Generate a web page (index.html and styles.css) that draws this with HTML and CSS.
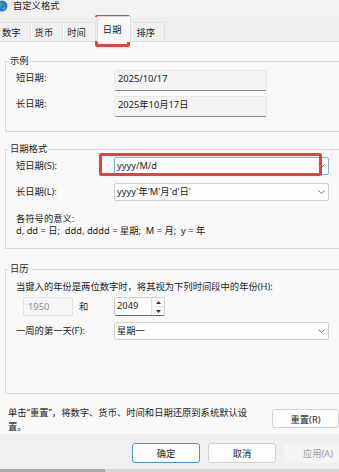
FILE: index.html
```html
<!DOCTYPE html>
<html lang="zh-CN">
<head>
  <meta charset="UTF-8">
  <title>自定义格式</title>
  <link rel="stylesheet" href="styles.css">
</head>
<body>
  <div class="dialog">
    <div class="titlebar">
      <svg class="app-icon" width="12" height="12" viewBox="0 0 12 12">
        <circle cx="6" cy="6" r="5.5" fill="#2b7bd6"/>
        <path d="M2.2 3.2 C3.5 2 5.2 2.2 6 3.4 C5.2 4.6 6.4 5.4 5.2 6.6 C4 7 3.4 6 2.6 6.4 C1.6 5.4 1.6 4.2 2.2 3.2 Z" fill="#4fb44a"/>
        <path d="M7.2 7.2 C8.4 6.8 9.6 7.4 10.2 8.2 C9.4 9.8 8.2 10.6 7 10.8 C7.4 9.6 6.6 8.2 7.2 7.2 Z" fill="#4fb44a"/>
      </svg>
      <span class="title">自定义格式</span>
    </div>

    <div class="tabs">
      <div class="tab">数字</div>
      <div class="tab">货币</div>
      <div class="tab">时间</div>
      <div class="tab active">日期</div>
      <div class="tab">排序</div>
    </div>

    <div class="panel">
      <fieldset class="group">
        <legend>示例</legend>
        <div class="group-body sample-body">
          <div class="row">
            <span class="label">短日期:</span>
            <div class="readonly">2025/10/17</div>
          </div>
          <div class="row">
            <span class="label">长日期:</span>
            <div class="readonly">2025年10月17日</div>
          </div>
        </div>
      </fieldset>

      <fieldset class="group group-format">
        <legend>日期格式</legend>
        <div class="group-body format-body">
          <div class="row row-center">
            <span class="label">短日期(S):</span>
            <div class="combo focused">
              <span>yyyy/M/d</span>
              <svg class="chevron" width="7" height="4" viewBox="0 0 7 4"><polyline points="0.5,0.5 3.5,3.5 6.5,0.5" fill="none" stroke="#6a6a6a" stroke-width="0.9"/></svg>
            </div>
          </div>
          <div class="row row-center">
            <span class="label">长日期(L):</span>
            <div class="combo">
              <span>yyyy'年'M'月'd'日'</span>
              <svg class="chevron" width="7" height="4" viewBox="0 0 7 4"><polyline points="0.5,0.5 3.5,3.5 6.5,0.5" fill="none" stroke="#6a6a6a" stroke-width="0.9"/></svg>
            </div>
          </div>
          <p class="note">各符号的意义:<br>d, dd = 日;&nbsp; ddd, dddd = 星期;&nbsp; M = 月;&nbsp; y = 年</p>
        </div>
      </fieldset>

      <fieldset class="group group-calendar">
        <legend>日历</legend>
        <div class="group-body calendar-body">
          <p class="line">当键入的年份是两位数字时，将其视为下列时间段中的年份(H):</p>
          <div class="year-row">
            <div class="year-box disabled">1950</div>
            <span class="and">和</span>
            <div class="year-box spin">
              <span>2049</span>
              <div class="spinner">
                <span class="spin-btn"><svg width="5" height="3" viewBox="0 0 5 3"><polygon points="0,3 2.5,0 5,3" fill="#333"/></svg></span>
                <span class="spin-btn"><svg width="5" height="3" viewBox="0 0 5 3"><polygon points="0,0 2.5,3 5,0" fill="#333"/></svg></span>
              </div>
            </div>
          </div>
          <div class="row row-center week-row">
            <span class="label">一周的第一天(F):</span>
            <div class="combo">
              <span>星期一</span>
              <svg class="chevron" width="7" height="4" viewBox="0 0 7 4"><polyline points="0.5,0.5 3.5,3.5 6.5,0.5" fill="none" stroke="#6a6a6a" stroke-width="0.9"/></svg>
            </div>
          </div>
        </div>
      </fieldset>

      <div class="reset-row">
        <p>单击“重置”，将数字、货币、时间和日期还原到系统默认设置。</p>
        <button class="btn reset">重置(R)</button>
      </div>
    </div>

    <div class="footer">
      <button class="btn default">确定</button>
      <button class="btn">取消</button>
      <button class="btn disabled">应用(A)</button>
    </div>
    <div class="bottom-strip"></div>

    <!-- red annotation frames drawn over the screenshot -->
    <span class="mark mark-tab"></span>
    <span class="mark mark-combo"></span>
  </div>
</body>
</html>
```

FILE: styles.css
```css
body {
  margin: 0;
  background-color: #f0f0f0;
  font-family: "Noto Sans", "Noto Sans CJK SC", sans-serif;
  font-size: 9.3px;
  color: #1b1b1b;
  overflow: hidden;
}

.dialog {
  position: relative;
  width: 339px;
  height: 472px;
  overflow: hidden;
}

.titlebar {
  height: 17px;
  display: flex;
  align-items: flex-start;
  background-color: #f2f2f2;
}

.app-icon {
  margin-left: -4px;
  margin-top: 0;
  flex-shrink: 0;
}

.title {
  margin-left: 5px;
  line-height: 12px;
}

.tabs {
  height: 24px;
  display: flex;
  align-items: flex-end;
  background-color: #eeeeee;
  margin-left: -2px;
  position: relative;
  z-index: 1;
}

.tab {
  box-sizing: border-box;
  height: 19px;
  padding: 3px 9px 0 3px;
  line-height: 14px;
  background-color: #f0f0f0;
  border: 1px solid #e0e0e0;
  border-left-color: #fbfbfb;
  border-bottom: none;
}

.tab.active {
  height: 26px;
  padding-top: 6px;
  padding-left: 5px;
  margin: 0 1px -1px 1px;
  background-color: #f9f9f9;
  border-color: #dcdcdc;
}

.panel {
  box-sizing: border-box;
  height: 393px;
  background-color: #f9f9f9;
  border-top: 1px solid #dcdcdc;
  padding: 12px 0 0 5px;
  overflow: hidden;
}

.group {
  margin: 0 -20px 0 0;
  padding: 0;
  border: 1px solid #dcdcdc;
  min-width: 0;
}

.group legend {
  margin-left: 3px;
  padding: 0 1px;
  line-height: 14px;
}

.group-format {
  margin-top: 10px;
}

.group-calendar {
  margin-top: 13px;
}

.group-body {
  padding-left: 10px;
}

.sample-body {
  padding-top: 2px;
  padding-bottom: 14px;
  display: flex;
  flex-direction: column;
  gap: 5px;
}

.format-body {
  padding-top: 1px;
  padding-bottom: 11px;
  display: flex;
  flex-direction: column;
  gap: 8px;
}

.calendar-body {
  padding-top: 4px;
  padding-bottom: 53px;
}

.row {
  display: flex;
  align-items: flex-start;
}

.row-center {
  align-items: center;
}

.label {
  width: 98px;
  flex-shrink: 0;
  line-height: 14px;
  padding-top: 1px;
}

.row-center .label {
  padding-top: 0;
}

.readonly {
  box-sizing: border-box;
  width: 153px;
  height: 21px;
  padding: 1px 3px 0;
  line-height: 14px;
  background-color: #f4f4f4;
  border: 1px solid #e8e8e8;
  border-bottom: 1px solid #8a8a8a;
  border-radius: 2px;
}

.combo {
  box-sizing: border-box;
  width: 215px;
  height: 18px;
  display: flex;
  align-items: center;
  justify-content: space-between;
  padding: 0 3px 0 2px;
  background-color: #fdfdfd;
  border: 1px solid #d0d0d0;
  border-radius: 2px;
  line-height: 14px;
}

.combo.focused {
  border-color: #78b2e6;
}

.note {
  margin: 4px 0 0;
  line-height: 12px;
}

.line {
  margin: 0;
  line-height: 14px;
}

.year-row {
  display: flex;
  align-items: center;
  margin-top: 3px;
}

.year-box {
  box-sizing: border-box;
  height: 19px;
  line-height: 14px;
  border: 1px solid #d0d0d0;
  border-radius: 2px;
}

.year-box.disabled {
  width: 50px;
  margin-left: 7px;
  padding: 2px 4px 0;
  color: #8d8d8d;
  background-color: #f6f6f6;
  border-color: #e4e4e4;
}

.and {
  width: 41px;
  box-sizing: border-box;
  padding-left: 6px;
  line-height: 14px;
}

.year-box.spin {
  width: 51px;
  display: flex;
  justify-content: space-between;
  padding-left: 2px;
  background-color: #fdfdfd;
  border-bottom-color: #6e6e6e;
}

.year-box.spin > span {
  padding-top: 1px;
}

.spinner {
  width: 12px;
  display: flex;
  flex-direction: column;
  border-left: 1px solid #e0e0e0;
}

.spin-btn {
  flex: 1;
  display: flex;
  align-items: center;
  justify-content: center;
}

.spin-btn + .spin-btn {
  border-top: 1px solid #e6e6e6;
}

.week-row {
  margin-top: 6px;
}

.reset-row {
  display: flex;
  align-items: flex-start;
  justify-content: space-between;
  margin-top: 12px;
}

.reset-row p {
  margin: 0 0 0 3px;
  max-width: 243px;
  line-height: 14px;
}

.btn {
  box-sizing: border-box;
  height: 20px;
  width: 68px;
  flex-shrink: 0;
  padding: 0;
  font-family: inherit;
  font-size: 9.3px;
  color: #1b1b1b;
  background-color: #fdfdfd;
  border: 1px solid #d3d3d3;
  border-radius: 3px;
}

.btn.reset {
  width: 67px;
  height: 19px;
  margin-top: 3px;
}

.footer {
  height: 35px;
  box-sizing: border-box;
  padding: 9px 0 0 132px;
  display: flex;
  gap: 8px;
}

.btn.default {
  border-color: #4b8fd8;
}

.btn.disabled {
  color: #9e9e9e;
  background-color: #f5f5f5;
  border-color: #f5f5f5;
}

.bottom-strip {
  height: 3px;
  background: linear-gradient(to right, #a8a8a8 0, #a8a8a8 105px, #d6d6d6 105px);
}

.mark {
  position: absolute;
  box-sizing: border-box;
  border: 3px solid #e8413d;
  border-radius: 2px;
}

.mark-tab {
  left: 95px;
  top: 15px;
  width: 35px;
  height: 32px;
}

.mark-combo {
  left: 99px;
  top: 153px;
  width: 223px;
  height: 23px;
}
```
